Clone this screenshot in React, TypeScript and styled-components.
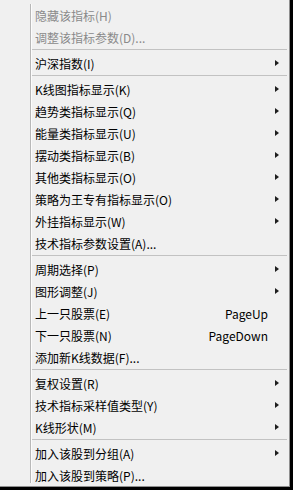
import styled, { createGlobalStyle } from 'styled-components';

type MenuEntry =
  | { kind: 'sep' }
  | { kind: 'item'; label: string; disabled?: boolean; submenu?: boolean; shortcut?: string };

const ENTRIES: MenuEntry[] = [
  { kind: 'item', label: '隐藏该指标(H)', disabled: true },
  { kind: 'item', label: '调整该指标参数(D)...', disabled: true },
  { kind: 'sep' },
  { kind: 'item', label: '沪深指数(I)', submenu: true },
  { kind: 'sep' },
  { kind: 'item', label: 'K线图指标显示(K)', submenu: true },
  { kind: 'item', label: '趋势类指标显示(Q)', submenu: true },
  { kind: 'item', label: '能量类指标显示(U)', submenu: true },
  { kind: 'item', label: '摆动类指标显示(B)', submenu: true },
  { kind: 'item', label: '其他类指标显示(O)', submenu: true },
  { kind: 'item', label: '策略为王专有指标显示(O)', submenu: true },
  { kind: 'item', label: '外挂指标显示(W)', submenu: true },
  { kind: 'item', label: '技术指标参数设置(A)...' },
  { kind: 'sep' },
  { kind: 'item', label: '周期选择(P)', submenu: true },
  { kind: 'item', label: '图形调整(J)', submenu: true },
  { kind: 'item', label: '上一只股票(E)', shortcut: 'PageUp' },
  { kind: 'item', label: '下一只股票(N)', shortcut: 'PageDown' },
  { kind: 'item', label: '添加新K线数据(F)...' },
  { kind: 'sep' },
  { kind: 'item', label: '复权设置(R)', submenu: true },
  { kind: 'item', label: '技术指标采样值类型(Y)', submenu: true },
  { kind: 'item', label: 'K线形状(M)', submenu: true },
  { kind: 'sep' },
  { kind: 'item', label: '加入该股到分组(A)', submenu: true },
  { kind: 'item', label: '加入该股到策略(P)...' },
];

const GlobalStyle = createGlobalStyle`
  html, body {
    margin: 0;
    padding: 0;
    background: #000;
  }
  body {
    font-family: "Noto Sans CJK SC", "Liberation Sans", sans-serif;
  }
`;

const Screen = styled.div`
  width: 293px;
  height: 490px;
  overflow: hidden;
  background: #000;
`;

const Menu = styled.div`
  display: flex;
  width: 289px;
  height: 479px;
  padding: 4px 0 3px;
  background: #f0f0f0;
  border-right: 1px solid #8f8f8f;
  border-bottom: 1px solid #8f8f8f;
`;

const Gutter = styled.div`
  width: 30px;
  flex-shrink: 0;
  border-right: 1px solid #b8b8b8;
`;

const List = styled.div`
  flex: 1;
  display: flex;
  flex-direction: column;
  border-left: 1px solid #fcfcfc;
`;

const Row = styled.div<{ $disabled?: boolean }>`
  display: flex;
  align-items: center;
  height: 22px;
  flex-shrink: 0;
  padding-left: 3px;
  font-size: 12px;
  color: ${({ $disabled }) => ($disabled ? '#8a8a8a' : '#000')};
  white-space: nowrap;
`;

const Label = styled.span`
  flex: 1;
`;

const Shortcut = styled.span`
  font-size: 12px;
`;

const ArrowCell = styled.span`
  width: 21px;
  flex-shrink: 0;
  display: flex;
  align-items: center;
  padding-left: 7px;
  box-sizing: border-box;
`;

const Arrow = styled.span`
  width: 0;
  height: 0;
  border-left: 4px solid #1e1e1e;
  border-top: 3.5px solid transparent;
  border-bottom: 3.5px solid transparent;
`;

const Separator = styled.div`
  height: 4px;
  flex-shrink: 0;
  padding: 1px 2px 0 0;
  box-sizing: border-box;

  &::before {
    content: '';
    display: block;
    height: 1px;
    background: #c2c2c2;
  }
`;

export default function App() {
  return (
    <Screen>
      <GlobalStyle />
      <Menu>
        <Gutter />
        <List>
          {ENTRIES.map((entry, i) =>
            entry.kind === 'sep' ? (
              <Separator key={i} />
            ) : (
              <Row key={i} $disabled={entry.disabled}>
                <Label>{entry.label}</Label>
                {entry.shortcut && <Shortcut>{entry.shortcut}</Shortcut>}
                <ArrowCell>{entry.submenu && <Arrow />}</ArrowCell>
              </Row>
            )
          )}
        </List>
      </Menu>
    </Screen>
  );
}
